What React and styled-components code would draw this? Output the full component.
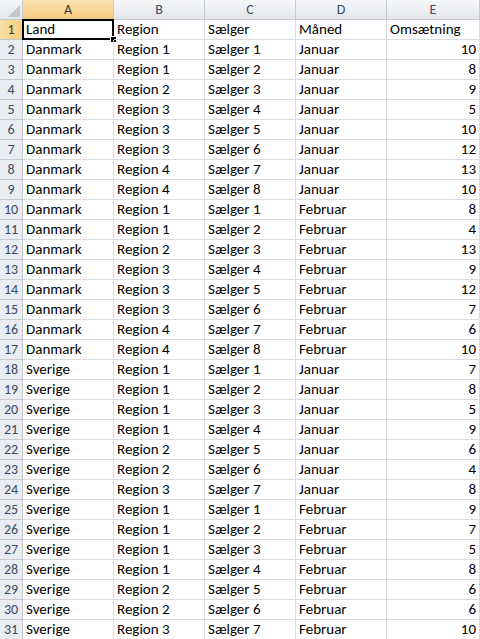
import styled, { createGlobalStyle } from "styled-components";

const GlobalStyle = createGlobalStyle`
  html, body {
    margin: 0;
    padding: 0;
    background: #ffffff;
  }
  body {
    font-family: Carlito, Lato, "Liberation Sans", sans-serif;
  }
`;

const columns = ["A", "B", "C", "D", "E"];

const rows = [
  ["Land", "Region", "Sælger", "Måned", "Omsætning"],
  ["Danmark", "Region 1", "Sælger 1", "Januar", 10],
  ["Danmark", "Region 1", "Sælger 2", "Januar", 8],
  ["Danmark", "Region 2", "Sælger 3", "Januar", 9],
  ["Danmark", "Region 3", "Sælger 4", "Januar", 5],
  ["Danmark", "Region 3", "Sælger 5", "Januar", 10],
  ["Danmark", "Region 3", "Sælger 6", "Januar", 12],
  ["Danmark", "Region 4", "Sælger 7", "Januar", 13],
  ["Danmark", "Region 4", "Sælger 8", "Januar", 10],
  ["Danmark", "Region 1", "Sælger 1", "Februar", 8],
  ["Danmark", "Region 1", "Sælger 2", "Februar", 4],
  ["Danmark", "Region 2", "Sælger 3", "Februar", 13],
  ["Danmark", "Region 3", "Sælger 4", "Februar", 9],
  ["Danmark", "Region 3", "Sælger 5", "Februar", 12],
  ["Danmark", "Region 3", "Sælger 6", "Februar", 7],
  ["Danmark", "Region 4", "Sælger 7", "Februar", 6],
  ["Danmark", "Region 4", "Sælger 8", "Februar", 10],
  ["Sverige", "Region 1", "Sælger 1", "Januar", 7],
  ["Sverige", "Region 1", "Sælger 2", "Januar", 8],
  ["Sverige", "Region 1", "Sælger 3", "Januar", 5],
  ["Sverige", "Region 1", "Sælger 4", "Januar", 9],
  ["Sverige", "Region 2", "Sælger 5", "Januar", 6],
  ["Sverige", "Region 2", "Sælger 6", "Januar", 4],
  ["Sverige", "Region 3", "Sælger 7", "Januar", 8],
  ["Sverige", "Region 1", "Sælger 1", "Februar", 9],
  ["Sverige", "Region 1", "Sælger 2", "Februar", 7],
  ["Sverige", "Region 1", "Sælger 3", "Februar", 5],
  ["Sverige", "Region 1", "Sælger 4", "Februar", 8],
  ["Sverige", "Region 2", "Sælger 5", "Februar", 6],
  ["Sverige", "Region 2", "Sælger 6", "Februar", 6],
  ["Sverige", "Region 3", "Sælger 7", "Februar", 10],
];

export default function App() {
  return (
    <>
      <GlobalStyle />
      <Sheet>
        <Corner />
        {columns.map((c, i) => (
          <ColHeader key={c} active={i === 0}>
            {c}
          </ColHeader>
        ))}
        {rows.map((row, r) => (
          <Row key={r}>
            <RowHeader active={r === 0}>{r + 1}</RowHeader>
            {row.map((value, c) => (
              <Cell
                key={c}
                numeric={typeof value === "number"}
                selected={r === 0 && c === 0}
              >
                {value}
              </Cell>
            ))}
          </Row>
        ))}
      </Sheet>
    </>
  );
}

const Sheet = styled.div`
  display: grid;
  grid-template-columns: 23px repeat(4, 91px) 1fr;
  grid-auto-rows: 20px;
  width: 480px;
  height: 639px;
  overflow: hidden;
  color: #000000;
  font-size: 15px;
`;

const Row = styled.div`
  display: contents;
`;

const HeaderBase = styled.div`
  box-sizing: border-box;
  display: flex;
  align-items: center;
  justify-content: center;
  font-size: 14px;
  color: #3a4a63;
  border-right: 1px solid #c6c9ce;
  border-bottom: 1px solid #c6c9ce;
`;

const Corner = styled(HeaderBase)`
  position: relative;
  background: linear-gradient(#f4f6f8, #e4e7eb);
  border-right-color: #c6c9ce;

  &::after {
    content: "";
    position: absolute;
    right: 2px;
    bottom: 2px;
    width: 0;
    height: 0;
    border-left: 12px solid transparent;
    border-bottom: 12px solid #c3c6ca;
  }
`;

const ColHeader = styled(HeaderBase)`
  background: ${(p) =>
    p.active
      ? "linear-gradient(#fae3b3, #f5cb79)"
      : "linear-gradient(#f6f7f9, #e3e6ea)"};
  border-bottom-color: ${(p) => (p.active ? "#e3a84d" : "#c6c9ce")};
  color: ${(p) => (p.active ? "#3b3b3b" : "#3a4a63")};
`;

const RowHeader = styled(HeaderBase)`
  background: ${(p) =>
    p.active ? "linear-gradient(90deg, #fae0a8, #f6cd7c)" : "#e9ecf0"};
  border-right-color: ${(p) => (p.active ? "#e3a84d" : "#c6c9ce")};
  color: ${(p) => (p.active ? "#3b3b3b" : "#3a4a63")};
`;

const Cell = styled.div`
  box-sizing: border-box;
  position: relative;
  display: flex;
  align-items: flex-end;
  justify-content: ${(p) => (p.numeric ? "flex-end" : "flex-start")};
  padding: 0 3px 1px;
  white-space: nowrap;
  overflow: ${(p) => (p.selected ? "visible" : "hidden")};
  border-right: 1px solid #dadcdd;
  border-bottom: 1px solid #dadcdd;

  ${(p) =>
    p.selected &&
    `
    &::before {
      content: "";
      position: absolute;
      left: -1px;
      top: -1px;
      right: -1px;
      bottom: -1px;
      border: 2px solid #000000;
      pointer-events: none;
    }
    &::after {
      content: "";
      position: absolute;
      right: -4px;
      bottom: -4px;
      width: 5px;
      height: 5px;
      background: #000000;
      border: 1px solid #ffffff;
    }
  `}
`;
